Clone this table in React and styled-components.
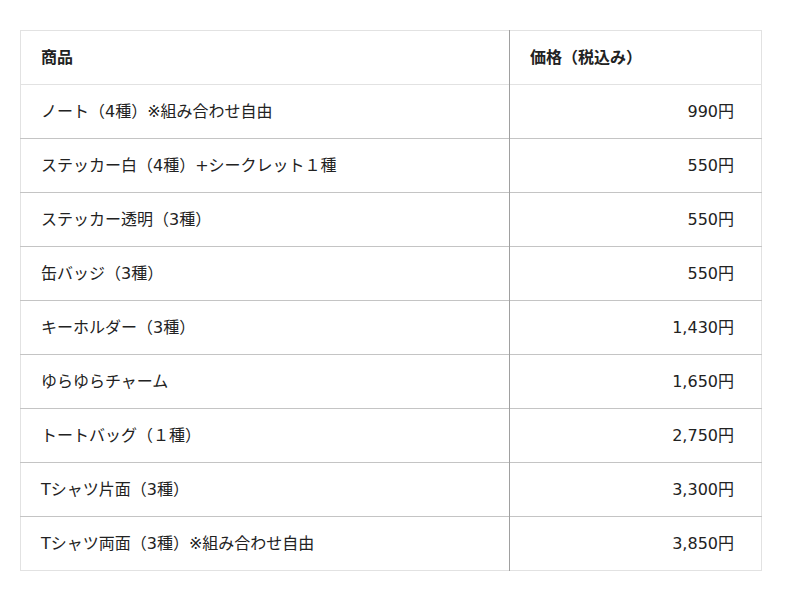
import React from "react";
import styled, { createGlobalStyle } from "styled-components";

const GlobalStyle = createGlobalStyle`
  body {
    margin: 0;
    background: #ffffff;
    font-family: "DejaVu Sans", "Noto Sans CJK JP", sans-serif;
    color: #222222;
  }
`;

const Page = styled.div`
  padding: 30px 20px;
`;

const Table = styled.table`
  width: 742px;
  border-collapse: collapse;
  border: 1px solid #e2e2e2;
  font-size: 16px;
`;

const Row = styled.tr`
  height: 54px;
  border-bottom: 1px solid #c4c4c4;

  &:last-child {
    border-bottom: 1px solid #e2e2e2;
  }
`;

const Cell = styled.td`
  padding: 0 27px 0 20px;
  line-height: 20px;
  text-align: ${(p) => (p.$align === "right" ? "right" : "left")};
  font-weight: ${(p) => (p.$head ? "bold" : "normal")};
  border-left: ${(p) => (p.$divider ? "1px solid #a0a0a0" : "none")};
  width: ${(p) => (p.$divider ? "252px" : "auto")};
  box-sizing: border-box;
  vertical-align: middle;
`;

const items = [
  ["ノート（4種）※組み合わせ自由", "990円"],
  ["ステッカー白（4種）+シークレット１種", "550円"],
  ["ステッカー透明（3種）", "550円"],
  ["缶バッジ（3種）", "550円"],
  ["キーホルダー（3種）", "1,430円"],
  ["ゆらゆらチャーム", "1,650円"],
  ["トートバッグ（１種）", "2,750円"],
  ["Tシャツ片面（3種）", "3,300円"],
  ["Tシャツ両面（3種）※組み合わせ自由", "3,850円"],
];

const App = () => {
  return (
    <Page>
      <GlobalStyle />
      <Table>
        <thead>
          <Row>
            <Cell as="th" $head>
              商品
            </Cell>
            <Cell as="th" $head $divider>
              価格（税込み）
            </Cell>
          </Row>
        </thead>
        <tbody>
          {items.map(([name, price]) => (
            <Row key={name}>
              <Cell>{name}</Cell>
              <Cell $divider $align="right">
                {price}
              </Cell>
            </Row>
          ))}
        </tbody>
      </Table>
    </Page>
  );
};

export default App;
